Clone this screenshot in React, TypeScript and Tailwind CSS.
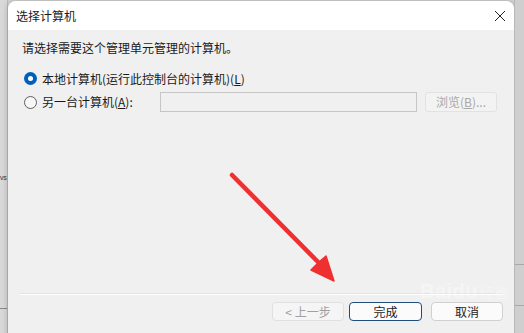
const font = "font-['Microsoft_YaHei','Noto_Sans_CJK_SC',sans-serif]";

function Radio({ checked }: { checked?: boolean }) {
  if (checked) {
    return (
      <span className="w-[13px] h-[13px] rounded-full bg-[#005fb8] flex items-center justify-center shrink-0">
        <span className="w-[5px] h-[5px] rounded-full bg-white" />
      </span>
    );
  }
  return <span className="w-[13px] h-[13px] rounded-full border border-[#5f5f5f] bg-[#f7f7f7] shrink-0" />;
}

function Btn({ children, kind, className = "" }: { children: React.ReactNode; kind?: "disabled" | "default"; className?: string }) {
  const cls =
    kind === "disabled"
      ? "border-[#e0e0e0] bg-[#f5f5f5] text-[#a0a0a0]"
      : kind === "default"
      ? "border-[#1f4e79] border-[1.5px] bg-[#fbfbfb] text-[#1a1a1a]"
      : "border-[#d0d0d0] bg-[#fbfbfb] text-[#1a1a1a]";
  return (
    <div className={`w-[72px] h-[19px] rounded-[4px] border flex items-center justify-center text-[12px] ${cls} ${className}`}>
      {children}
    </div>
  );
}

export default function App() {
  return (
    <div className={`relative w-[524px] h-[333px] overflow-hidden flex bg-[#d6d6d6] ${font}`}>
      {/* left window behind */}
      <div className="w-[8px] shrink-0 h-full bg-[#d9d9d9] border-r border-[#bdbdbd] flex flex-col">
        <div className="h-[174px]" />
        <div className="text-[7px] leading-[8px] text-[#333] tracking-tighter font-['Liberation_Sans',sans-serif]">vs</div>
        <div className="h-[126px]" />
        <div className="h-px bg-[#8a8a8a]" />
      </div>

      {/* dialog */}
      <div className="w-[506px] shrink-0 h-[360px] mt-[1px] rounded-t-[8px] bg-[#f0f0f0] shadow-[0_0_6px_rgba(0,0,0,0.25)] flex flex-col overflow-hidden">
        <div className="h-[29px] bg-white flex items-center justify-between pl-[8px] pr-[8px]">
          <span className="text-[12px] text-[#1a1a1a]">选择计算机</span>
          <svg width="12" height="12" viewBox="0 0 12 12">
            <path d="M1 1 L11 11 M11 1 L1 11" stroke="#222" strokeWidth="1" />
          </svg>
        </div>

        <div className="flex flex-col pl-[14px] pr-[10px] text-[12px] text-[#1a1a1a]">
          <div className="h-[35px] flex items-center">请选择需要这个管理单元管理的计算机。</div>

          <div className="mt-[5px] flex flex-col gap-[5px] pl-[2px]">
            <div className="h-[17px] flex items-center gap-[5px]">
              <Radio checked />
              <span>
                本地计算机(运行此控制台的计算机)(<span className="underline">L</span>)
              </span>
            </div>
            <div className="h-[20px] flex items-center">
              <div className="w-[136px] flex items-center gap-[5px]">
                <Radio />
                <span>
                  另一台计算机(<span className="underline">A</span>):
                </span>
              </div>
              <div className="w-[257px] h-[20px] border border-[#c6c6c6] bg-[#f0f0f0]" />
              <div className="ml-[8px] w-[72px] h-[20px] border border-[#e2e2e2] rounded-[3px] bg-[#f3f3f3] text-[#a8a8a8] flex items-center justify-center">
                浏览(<span className="underline">B</span>)...
              </div>
            </div>
          </div>
        </div>

        <div className="mt-[181px] mx-[12px] border-t border-[#e3e3e3] h-0 shadow-[0_1px_0_#ffffff]" />

        <div className="mt-[8px] pr-[11px] flex justify-end">
          <Btn kind="disabled">&lt; 上一步</Btn>
          <Btn kind="default" className="ml-[5px] w-[73px]">完成</Btn>
          <Btn className="ml-[9px]">取消</Btn>
        </div>
      </div>

      {/* right window behind */}
      <div className="flex-1 h-full bg-[#cfcfcf] border-l border-[#b8b8b8] flex flex-col">
        <div className="h-[264px]" />
        <div className="h-px bg-[#a8a8a8]" />
        <div className="h-[40px]" />
        <div className="h-px bg-[#a8a8a8]" />
      </div>

      {/* watermark */}
      <div className="absolute left-[420px] top-[276px] text-[20px] font-bold text-white/40 font-['Liberation_Sans',sans-serif] tracking-wide">
        Baidu<span className="text-[14px] font-normal ml-[2px]">经验</span>
      </div>

      {/* red arrow */}
      <svg className="absolute left-0 top-0" width="524" height="333" viewBox="0 0 524 333">
        <path
          d="M232 175 L318 263 L311 270 L334 281 L326 256 L319 262 Z"
          fill="#ee3030"
          stroke="#ee3030"
          strokeWidth="1.5"
          strokeLinejoin="round"
        />
        <path d="M232 175 L320 264" stroke="#ee3030" strokeWidth="4.5" strokeLinecap="round" />
      </svg>
    </div>
  );
}
